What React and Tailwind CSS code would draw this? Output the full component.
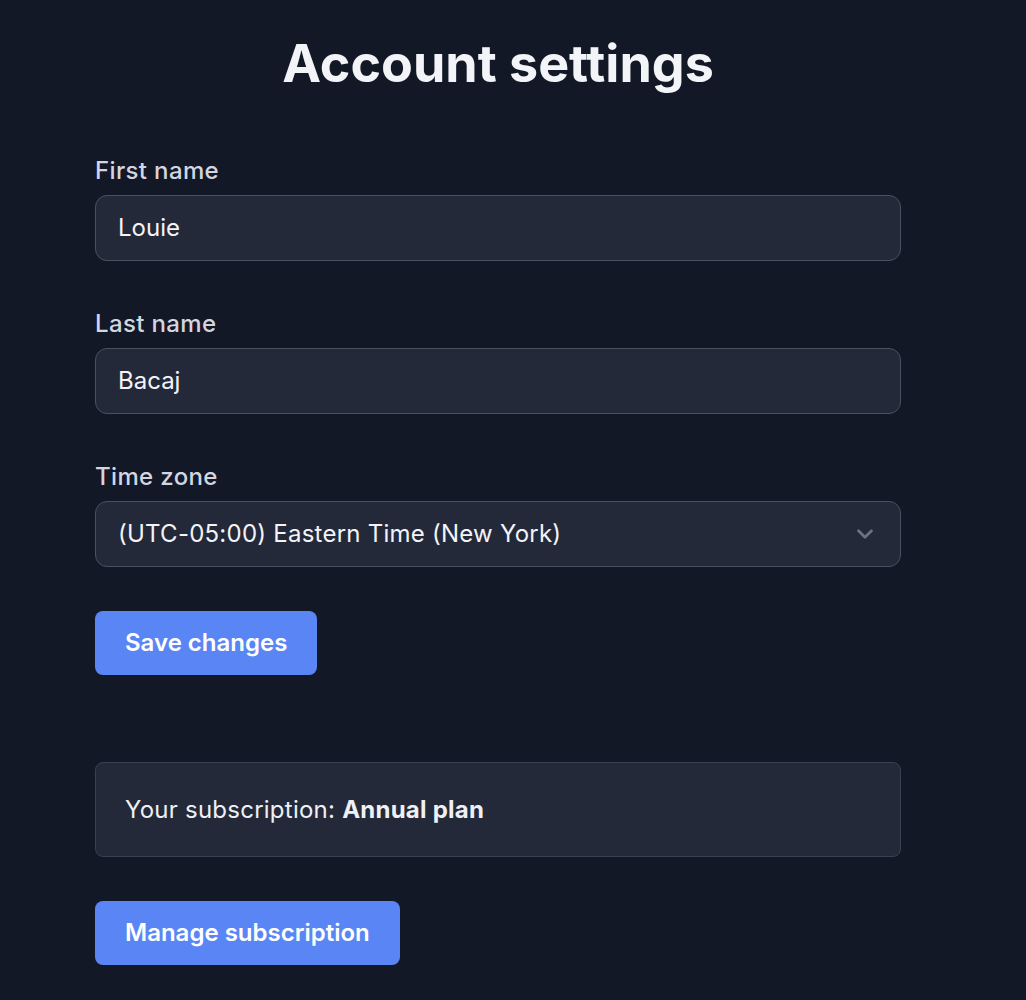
import { ChevronDown } from "lucide-react";

const Field = ({ label, children }) => (
  <div className="flex flex-col">
    <label className="pt-[3px] text-[24px] leading-[36px] font-medium tracking-[0.015em] text-[#d3d6e0]">
      {label}
    </label>
    <div className="mt-[6px]">{children}</div>
  </div>
);

const TextInput = ({ value }) => (
  <div className="h-[66px] rounded-xl border border-[#4a5060] bg-[#232938] px-[22px] flex items-center text-[24px] text-[#f3f4f8]">
    {value}
  </div>
);

export default function App() {
  return (
    <div
      className="min-h-screen bg-[#131827] text-white"
      style={{ fontFamily: "Inter, 'Noto Sans', sans-serif" }}
    >
      <div className="w-[806px] ml-[95px] pt-[33px] pb-10">
        <h1 className="text-center text-[52px] leading-[62px] font-bold text-[#f3f4f8]">
          Account settings
        </h1>

        <div className="mt-[55px] flex flex-col gap-[42px]">
          <Field label="First name">
            <TextInput value="Louie" />
          </Field>
          <Field label="Last name">
            <TextInput value="Bacaj" />
          </Field>
          <Field label="Time zone">
            <div className="h-[66px] rounded-xl border border-[#4a5060] bg-[#232938] pl-[22px] pr-[22px] flex items-center justify-between text-[24px] tracking-[0.01em] text-[#f3f4f8]">
              <span>(UTC-05:00) Eastern Time (New York)</span>
              <ChevronDown className="w-[26px] h-[26px] text-[#6b7280]" strokeWidth={2.5} />
            </div>
          </Field>
        </div>

        <button className="mt-[44px] h-[64px] px-[30px] rounded-lg bg-[#5a86f5] text-[24px] font-semibold text-white">
          Save changes
        </button>

        <div className="mt-[87px] h-[95px] rounded-lg border border-[#3a4050] bg-[#232938] px-[29px] flex items-center text-[24px] tracking-[0.01em] text-[#eef0f5]">
          <span>
            Your subscription: <span className="font-bold">Annual plan</span>
          </span>
        </div>

        <button className="mt-[44px] h-[64px] px-[30px] rounded-lg bg-[#5a86f5] text-[24px] font-semibold text-white">
          Manage subscription
        </button>
      </div>
    </div>
  );
}
